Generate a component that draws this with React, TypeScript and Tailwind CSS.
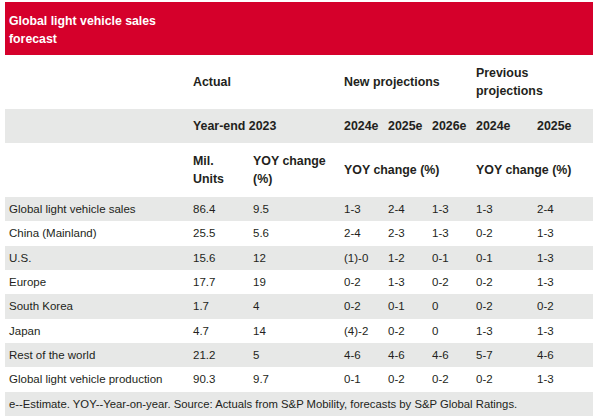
import React from "react";

const cols = "grid grid-cols-[184px_60px_91px_44px_44px_44px_61px_60px]";

const rows: [string, string, string, string, string, string, string, string][] = [
  ["Global light vehicle sales", "86.4", "9.5", "1-3", "2-4", "1-3", "1-3", "2-4"],
  ["China (Mainland)", "25.5", "5.6", "2-4", "2-3", "1-3", "0-2", "1-3"],
  ["U.S.", "15.6", "12", "(1)-0", "1-2", "0-1", "0-1", "1-3"],
  ["Europe", "17.7", "19", "0-2", "1-3", "0-2", "0-2", "1-3"],
  ["South Korea", "1.7", "4", "0-2", "0-1", "0", "0-2", "0-2"],
  ["Japan", "4.7", "14", "(4)-2", "0-2", "0", "1-3", "1-3"],
  ["Rest of the world", "21.2", "5", "4-6", "4-6", "4-6", "5-7", "4-6"],
  ["Global light vehicle production", "90.3", "9.7", "0-1", "0-2", "0-2", "0-2", "1-3"],
];

export default function App() {
  return (
    <div
      className="w-[600px] h-[419px] bg-white pt-[2px] pl-[5px] text-[#231f20]"
      style={{ fontFamily: '"Liberation Sans", Arial, sans-serif' }}
    >
      <div className="w-[588px]">
        <div className="bg-[#d5002b] h-[53px] px-[4px] pt-[10px] text-white font-bold text-[12.3px] leading-[18px]">
          Global light vehicle sales
          <br />
          forecast
        </div>

        <div className={`${cols} h-[54px] items-center font-bold text-[12.4px] leading-[18px]`}>
          <div />
          <div className="col-span-2 pl-[4px]">Actual</div>
          <div className="col-span-3 pl-[4px]">New projections</div>
          <div className="col-span-2 pl-[4px]">
            Previous
            <br />
            projections
          </div>
        </div>

        <div className={`${cols} h-[34px] items-center bg-[#e7e8e7] font-bold text-[12.4px] leading-[18px]`}>
          <div />
          <div className="col-span-2 pl-[4px]">Year-end 2023</div>
          <div className="pl-[4px]">2024e</div>
          <div className="pl-[4px]">2025e</div>
          <div className="pl-[4px]">2026e</div>
          <div className="pl-[4px]">2024e</div>
          <div className="pl-[4px]">2025e</div>
        </div>

        <div className={`${cols} h-[54px] items-center font-bold text-[12.4px] leading-[18px]`}>
          <div />
          <div className="pl-[4px]">
            Mil.
            <br />
            Units
          </div>
          <div className="pl-[4px]">
            YOY change
            <br />
            (%)
          </div>
          <div className="col-span-3 pl-[4px]">YOY change (%)</div>
          <div className="col-span-2 pl-[4px]">YOY change (%)</div>
        </div>

        {rows.map((r, i) => (
          <div
            key={i}
            className={`${cols} h-[24.33px] items-center text-[11.5px] leading-[16px] ${
              i % 2 === 0 ? "bg-[#e7e8e7]" : "bg-white"
            }`}
          >
            {r.map((c, j) => (
              <div key={j} className="pl-[4px] whitespace-nowrap">
                {c}
              </div>
            ))}
          </div>
        ))}

        <div className="h-[24.33px] flex items-center bg-[#e7e8e7] pl-[4px] text-[11.3px] leading-[16px] whitespace-nowrap">
          e--Estimate. YOY--Year-on-year. Source: Actuals from S&amp;P Mobility, forecasts by S&amp;P Global Ratings.
        </div>
      </div>
    </div>
  );
}
